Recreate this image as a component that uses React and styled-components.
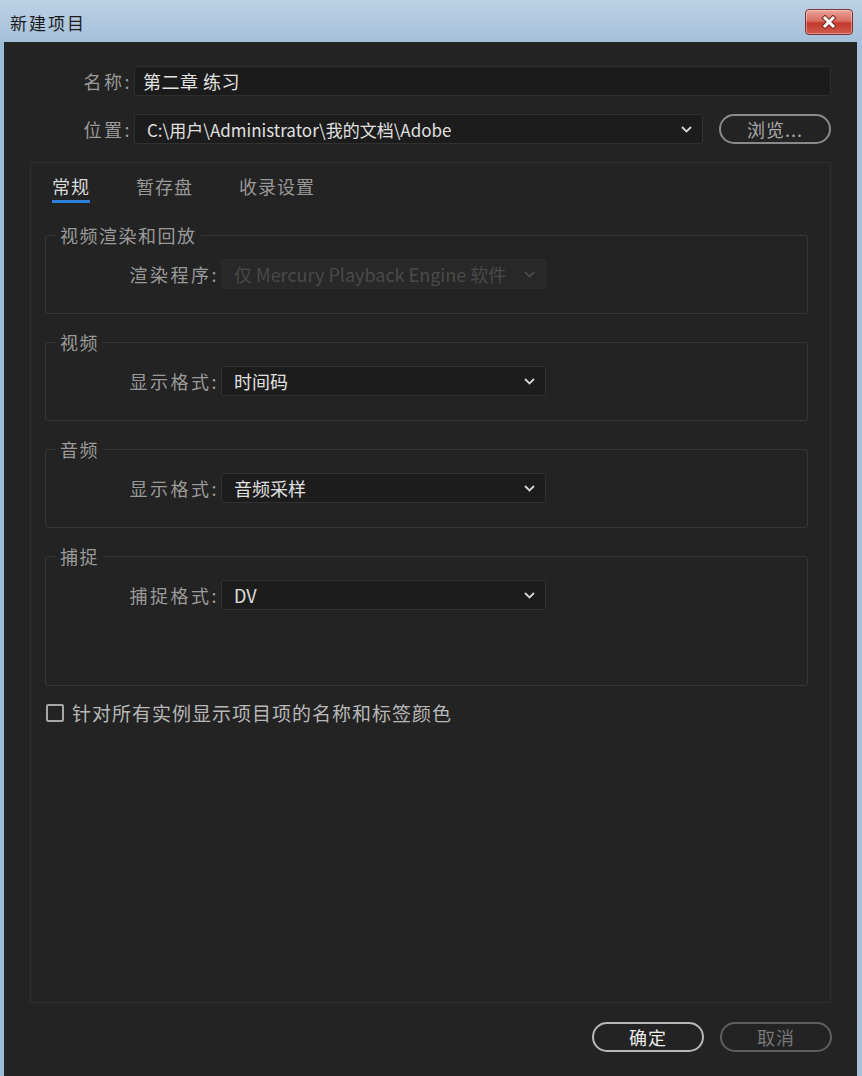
import React from 'react';
import styled, { createGlobalStyle } from 'styled-components';

const GlobalStyle = createGlobalStyle`
  html, body { margin: 0; padding: 0; }
  body {
    background: #9fbcd8;
    font-family: "Noto Sans CJK SC", "Noto Sans", sans-serif;
  }
  * { box-sizing: border-box; }
`;

// Window frame
const Window = styled.div`
  width: 862px;
  height: 1076px;
  display: flex;
  flex-direction: column;
  background: linear-gradient(90deg, #9dbad6 0%, #b4cbe1 55%, #a6c1db 100%);
  overflow: hidden;
`;

const TitleBar = styled.div`
  height: 42px;
  flex: none;
  display: flex;
  align-items: center;
  justify-content: space-between;
  padding: 0 9px 0 10px;
  background: linear-gradient(180deg, #bcd1e5 0%, #a5c0da 100%);
`;

const Title = styled.div`
  font-size: 17px;
  color: #1c1c1c;
  letter-spacing: 2px;
  margin-top: 2px;
`;

const CloseButton = styled.div`
  width: 48px;
  height: 26px;
  margin-top: 2px;
  border: 1px solid #7a3434;
  border-radius: 4px;
  display: flex;
  align-items: center;
  justify-content: center;
  background: linear-gradient(180deg, #eaa69e 0%, #db6c60 45%, #c23a2c 55%, #d35a4c 100%);
  box-shadow: inset 0 0 0 1px rgba(255, 255, 255, 0.35);
`;

const Body = styled.div`
  flex: 1;
  margin: 0 5px 0 4px;
  background: #232323;
  display: flex;
  flex-direction: column;
  padding: 24px 26px 24px 26px;
`;

// Top fields
const FieldRow = styled.div`
  display: flex;
  align-items: center;
  height: 30px;
  margin-bottom: 18px;
`;

const FieldLabel = styled.div`
  width: ${({ $w }) => $w}px;
  flex: none;
  text-align: right;
  font-size: 18px;
  letter-spacing: 2.5px;
  color: #9a9a9a;
  padding-right: 2px;
  white-space: nowrap;
`;

const TextInput = styled.div`
  flex: 1;
  height: 30px;
  display: flex;
  align-items: center;
  padding: 0 8px;
  background: #1b1b1b;
  border: 1px solid #2e2e2e;
  border-radius: 2px;
  font-size: 18px;
  color: #e2e2e2;
  letter-spacing: 0.5px;
`;

const Select = styled.div`
  flex: ${({ $w }) => ($w ? 'none' : '1')};
  width: ${({ $w }) => ($w ? `${$w}px` : 'auto')};
  height: 30px;
  display: flex;
  align-items: center;
  justify-content: space-between;
  padding: 0 10px 0 12px;
  background: ${({ $disabled }) => ($disabled ? '#282828' : '#1c1c1c')};
  border: 1px solid ${({ $disabled }) => ($disabled ? '#2b2b2b' : '#313131')};
  border-radius: 2px;
  font-size: ${({ $small }) => ($small ? 17 : 18)}px;
  color: ${({ $disabled }) => ($disabled ? '#4a4a4a' : '#e0e0e0')};
  white-space: nowrap;
`;

const PillButton = styled.div`
  width: 112px;
  height: 30px;
  flex: none;
  display: flex;
  align-items: center;
  justify-content: center;
  border-radius: 15px;
  border: 2px solid ${({ $tone }) => ($tone === 'strong' ? '#b8b8b8' : $tone === 'muted' ? '#5e5e5e' : '#8a8a8a')};
  font-size: 18px;
  color: ${({ $tone }) => ($tone === 'strong' ? '#ececec' : $tone === 'muted' ? '#767676' : '#a8a8a8')};
  letter-spacing: 1px;
`;

// Tabs panel
const TabPanel = styled.div`
  flex: 1;
  border: 1px solid #2f2f2f;
  padding: 10px 22px 0 14px;
  display: flex;
  flex-direction: column;
`;

const TabBar = styled.div`
  display: flex;
  gap: 46px;
  padding-left: 7px;
  margin-bottom: 20px;
`;

const Tab = styled.div`
  font-size: 18px;
  line-height: 26px;
  letter-spacing: 1px;
  padding-bottom: 1px;
  color: ${({ $active }) => ($active ? '#dadada' : '#989898')};
  border-bottom: 3px solid ${({ $active }) => ($active ? '#2f80dc' : 'transparent')};
`;

const Groups = styled.div`
  display: flex;
  flex-direction: column;
  gap: 16px;
`;

const GroupBox = styled.fieldset`
  margin: 0;
  border: 1px solid #363636;
  border-radius: 3px;
  padding: 12px 0 ${({ $tall }) => ($tall ? 75 : 24)}px 0;
  min-width: 0;
`;

const Legend = styled.legend`
  margin-left: 10px;
  padding: 0 4px;
  font-size: 18px;
  line-height: 24px;
  letter-spacing: 1.5px;
  color: #9a9a9a;
`;

const GroupRow = styled.div`
  display: flex;
  align-items: center;
  height: 30px;
`;

const CheckRow = styled.div`
  display: flex;
  align-items: center;
  gap: 8px;
  height: 28px;
  margin-top: 13px;
  padding-left: 1px;
`;

const CheckBox = styled.div`
  width: 18px;
  height: 18px;
  border: 2px solid #a6a6a6;
  border-radius: 2px;
`;

const CheckText = styled.div`
  font-size: 19px;
  line-height: 28px;
  letter-spacing: 1px;
  color: #b8b8b8;
`;

const Footer = styled.div`
  display: flex;
  justify-content: flex-end;
  gap: 16px;
  padding-top: 19px;
  margin-right: -1px;
`;

const Chevron = ({ dim }) => (
  <svg width="11" height="7" viewBox="0 0 11 7">
    <path d="M1 1 L5.5 5.5 L10 1" fill="none" stroke={dim ? '#4a4a4a' : '#d4d4d4'} strokeWidth="1.8" />
  </svg>
);

const CloseGlyph = () => (
  <svg width="16" height="14" viewBox="0 0 16 14">
    <path d="M4 3 L12 11 M12 3 L4 11" stroke="#7a2a22" strokeWidth="5" strokeLinecap="square" />
    <path d="M4 3 L12 11 M12 3 L4 11" stroke="#ffffff" strokeWidth="3" strokeLinecap="square" />
  </svg>
);

const groups = [
  { title: '视频渲染和回放', label: '渲染程序:', value: '仅 Mercury Playback Engine 软件', disabled: true },
  { title: '视频', label: '显示格式:', value: '时间码' },
  { title: '音频', label: '显示格式:', value: '音频采样' },
  { title: '捕捉', label: '捕捉格式:', value: 'DV', tall: true },
];

export default function App() {
  return (
    <>
      <GlobalStyle />
      <Window>
        <TitleBar>
          <Title>新建项目</Title>
          <CloseButton>
            <CloseGlyph />
          </CloseButton>
        </TitleBar>
        <Body>
          <FieldRow>
            <FieldLabel $w={104}>名称:</FieldLabel>
            <TextInput>第二章 练习</TextInput>
          </FieldRow>
          <FieldRow>
            <FieldLabel $w={104}>位置:</FieldLabel>
            <Select $small>
              <span>C:\用户\Administrator\我的文档\Adobe</span>
              <Chevron />
            </Select>
            <div style={{ width: 16 }} />
            <PillButton>浏览...</PillButton>
          </FieldRow>
          <TabPanel>
            <TabBar>
              <Tab $active>常规</Tab>
              <Tab>暂存盘</Tab>
              <Tab>收录设置</Tab>
            </TabBar>
            <Groups>
              {groups.map((g) => (
                <GroupBox key={g.title} $tall={g.tall}>
                  <Legend>{g.title}</Legend>
                  <GroupRow>
                    <FieldLabel $w={175}>{g.label}</FieldLabel>
                    <Select $w={325} $disabled={g.disabled}>
                      <span>{g.value}</span>
                      <Chevron dim={g.disabled} />
                    </Select>
                  </GroupRow>
                </GroupBox>
              ))}
            </Groups>
            <CheckRow>
              <CheckBox />
              <CheckText>针对所有实例显示项目项的名称和标签颜色</CheckText>
            </CheckRow>
          </TabPanel>
          <Footer>
            <PillButton $tone="strong">确定</PillButton>
            <PillButton $tone="muted">取消</PillButton>
          </Footer>
        </Body>
      </Window>
    </>
  );
}
